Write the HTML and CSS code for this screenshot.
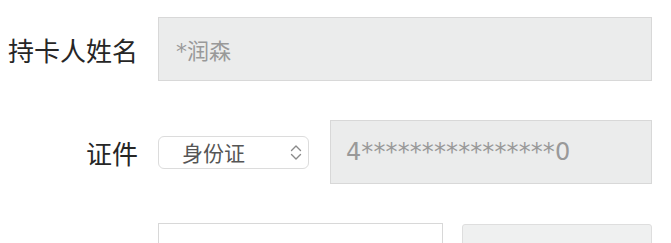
FILE: index.html
```html
<!DOCTYPE html>
<html lang="zh">
<head>
<meta charset="utf-8">
<link rel="stylesheet" href="styles.css">
</head>
<body>
<form class="form">
  <div class="row">
    <label class="label">持卡人姓名</label>
    <div class="field disabled name-field"><span class="value">*润森</span></div>
  </div>
  <div class="row">
    <label class="label">证件</label>
    <div class="select">
      <span class="select-text">身份证</span>
      <svg class="select-arrow" width="12" height="17" viewBox="0 0 12 17" fill="none" stroke="#8a8a8a" stroke-width="1.4" stroke-linecap="round" stroke-linejoin="round">
        <path d="M1.5 6.5 L6 2 L10.5 6.5"/>
        <path d="M1.5 10.5 L6 15 L10.5 10.5"/>
      </svg>
    </div>
    <div class="field disabled card-field"><span class="value card">4****************0</span></div>
  </div>
  <div class="row">
    <label class="label faint">手机号码</label>
    <div class="field phone-field"><span class="value placeholder">请输入手机号码</span></div>
    <div class="code-btn">获取验证码</div>
  </div>
</form>
</body>
</html>
```
FILE: styles.css
```css
html, body {
  margin: 0;
  padding: 0;
  background: #ffffff;
  overflow: hidden;
}
body {
  width: 671px;
  height: 243px;
  font-family: "Liberation Sans", "Noto Sans CJK SC", sans-serif;
}
.form {
  display: flex;
  flex-direction: column;
  gap: 39px;
  padding-top: 17px;
  padding-right: 19px;
}
.row {
  display: flex;
  align-items: center;
  height: 64px;
}
.label {
  width: 138px;
  flex: none;
  margin-right: 20px;
  text-align: right;
  font-family: "Noto Sans CJK SC", sans-serif;
  font-size: 26px;
  color: #262626;
  white-space: nowrap;
}
.label.faint {
  color: #9a9a9a;
  align-self: flex-start;
  margin-top: 19px;
}
.field {
  box-sizing: border-box;
  height: 64px;
  border: 1px solid #d8d8d8;
  display: flex;
  align-items: center;
  padding-left: 17px;
}
.field.disabled {
  background: #ebecec;
}
.name-field {
  flex: 1;
}
.card-field {
  flex: 1;
  margin-left: 21px;
  padding-left: 15px;
}
.phone-field {
  width: 285px;
  align-self: flex-start;
  background: #ffffff;
}
.value {
  font-family: "DejaVu Sans", "Noto Sans CJK SC", sans-serif;
  font-size: 22px;
  color: #999999;
}
.value.card {
  font-size: 24px;
  letter-spacing: 0.1px;
}
.value.placeholder {
  color: #c4c4c4;
  font-size: 21px;
  margin-top: 38px;
}
.select {
  box-sizing: border-box;
  width: 151px;
  height: 33px;
  flex: none;
  border: 1px solid #dcdcdc;
  border-radius: 6px;
  background: #ffffff;
  display: flex;
  align-items: center;
  padding-left: 23px;
  padding-right: 6px;
}
.select-text {
  flex: 1;
  font-family: "Noto Sans CJK SC", sans-serif;
  font-size: 21px;
  color: #555555;
}
.select-arrow {
  display: block;
  flex: none;
}
.code-btn {
  box-sizing: border-box;
  flex: 1;
  margin-left: 19px;
  align-self: flex-start;
  margin-top: 1px;
  height: 62px;
  border: 1px solid #dedede;
  border-radius: 3px;
  background: #eff0f0;
  display: flex;
  align-items: center;
  justify-content: center;
  font-family: "Noto Sans CJK SC", sans-serif;
  font-size: 21px;
  color: #b0b0b0;
}
```
